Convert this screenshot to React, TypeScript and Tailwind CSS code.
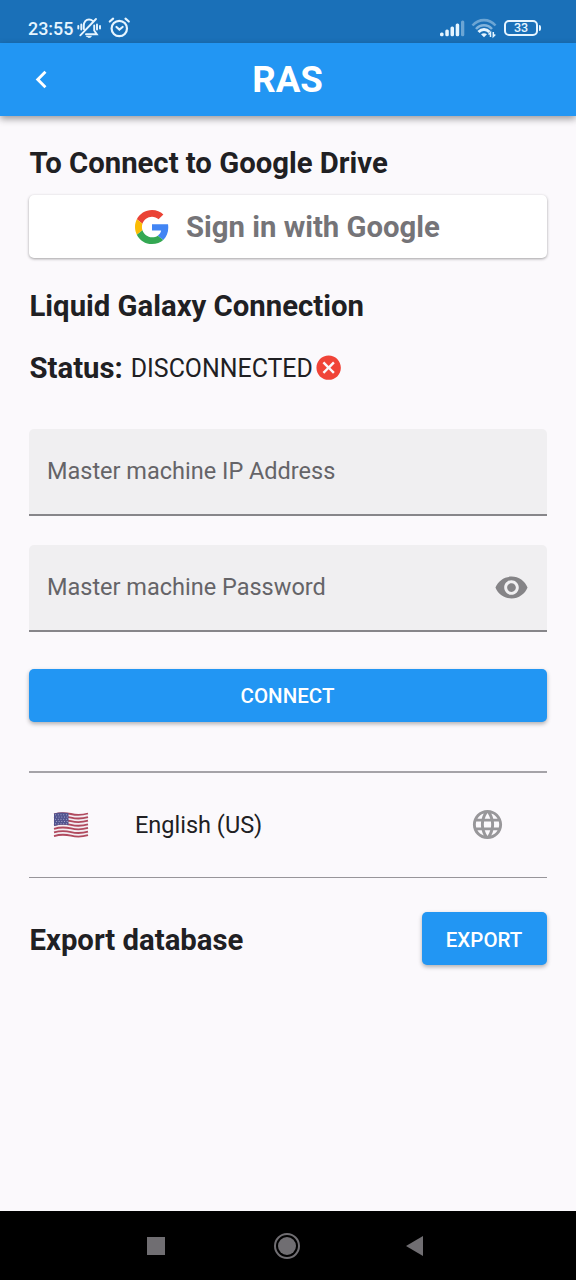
import type { ReactNode } from "react";

function Icon({ d, className }: { d: string; className: string }) {
  return (
    <svg viewBox="0 0 24 24" fill="currentColor" className={className} aria-hidden="true">
      <path d={d} />
    </svg>
  );
}

const CHEVRON = "M15.41 7.41L14 6l-6 6 6 6 1.41-1.41L10.83 12z";
const CANCEL =
  "M12 2C6.47 2 2 6.47 2 12s4.47 10 10 10 10-4.47 10-10S17.53 2 12 2zm5 13.59L15.59 17 12 13.41 8.41 17 7 15.59 10.59 12 7 8.41 8.41 7 12 10.59 15.59 7 17 8.41 13.41 12 17 15.59z";
const EYE =
  "M12 4.5C7 4.5 2.73 7.61 1 12c1.73 4.39 6 7.5 11 7.5s9.27-3.11 11-7.5c-1.73-4.39-6-7.5-11-7.5zM12 17c-2.76 0-5-2.24-5-5s2.24-5 5-5 5 2.24 5 5-2.24 5-5 5zm0-8c-1.66 0-3 1.34-3 3s1.34 3 3 3 3-1.34 3-3-1.34-3-3-3z";
const GLOBE =
  "M11.99 2C6.47 2 2 6.48 2 12s4.47 10 9.99 10C17.52 22 22 17.52 22 12S17.52 2 11.99 2zm6.93 6h-2.95c-.32-1.25-.78-2.45-1.38-3.56 1.84.63 3.37 1.91 4.33 3.56zM12 4.04c.83 1.2 1.48 2.53 1.91 3.96h-3.82c.43-1.43 1.08-2.76 1.91-3.96zM4.26 14C4.1 13.36 4 12.69 4 12s.1-1.36.26-2h3.38c-.08.66-.14 1.32-.14 2s.06 1.34.14 2H4.26zm.82 2h2.95c.32 1.25.78 2.45 1.38 3.56-1.84-.63-3.37-1.9-4.33-3.56zm2.95-8H5.08c.96-1.66 2.49-2.93 4.33-3.56C8.81 5.55 8.35 6.75 8.03 8zM12 19.96c-.83-1.2-1.48-2.53-1.91-3.96h3.82c-.43 1.43-1.08 2.76-1.91 3.96zM14.34 14H9.66c-.09-.66-.16-1.32-.16-2s.07-1.35.16-2h4.68c.09.65.16 1.32.16 2s-.07 1.34-.16 2zm.25 5.56c.6-1.11 1.06-2.31 1.38-3.56h2.95c-.96 1.65-2.49 2.93-4.33 3.56zM16.36 14c.08-.66.14-1.32.14-2s-.06-1.34-.14-2h3.38c.16.64.26 1.31.26 2s-.1 1.36-.26 2h-3.38z";

function StatusBar() {
  return (
    <div className="flex h-[43px] shrink-0 items-start bg-[#1a70b8] pt-[17px] pr-[35px] pl-7 text-[#e6f5ff]">
      <span className="w-[49px] text-[17.9px] leading-[23px] font-medium">23:55</span>
      <svg width="24" height="23" viewBox="0 0 24 23" fill="none" stroke="currentColor" strokeWidth="1.9" strokeLinecap="round" aria-hidden="true">
        <path d="M6.8 12V8.5C6.8 5 9 2.500 12 2.500c1.500 0 2.800.5 3.700 1.400M17.200 8.500v5L19.800 17.300H9M3.300 18.300L19 2M4.300 7.500v5M1.300 9v2.500M20 7.500v5M23 9v2.500" />
        <path d="M9.800 19.300h4.600c-.5 1.500-4.100 1.500-4.600 0z" fill="currentColor" strokeWidth="1" />
      </svg>
      <svg className="ml-[7px]" width="23" height="23" viewBox="0 0 23 23" fill="none" stroke="currentColor" strokeWidth="2.2" strokeLinecap="round" aria-hidden="true">
        <circle cx="11.3" cy="11.5" r="7.7" />
        <path d="M8.500 10l2.900 2.500 3.200-2.500M1.800 4.500L5.100 1.700M20.800 4.500L17.500 1.700" />
      </svg>
      <div className="ml-auto flex">
        <svg width="27" height="23" viewBox="0 0 27 23" fill="currentColor" aria-hidden="true">
          <rect x="1" y="15.5" width="3.6" height="3.8" rx="1.5" />
          <rect x="6.3" y="12.5" width="3.5" height="6.8" rx="1.5" />
          <rect x="11.5" y="9.5" width="3.5" height="9.8" rx="1.5" />
          <rect x="16.7" y="6.5" width="3.5" height="12.8" rx="1.5" />
          <rect x="22" y="3.5" width="3.3" height="15.8" rx="1.5" opacity=".4" />
        </svg>
        <svg className="ml-[5px]" width="26" height="23" viewBox="0 0 26 23" fill="none" stroke="currentColor" aria-hidden="true">
          <path d="M1.500 8.500C8 1.300 18 1.300 24.500 8.500" strokeWidth="2.6" opacity=".4" />
          <path d="M5 12C9.500 7 16.500 7 21 12" strokeWidth="2.5" opacity=".5" />
          <path d="M7.500 15c3.300-3.500 7.700-3.500 11 0" strokeWidth="3" />
          <path d="M10 17.300c2-1.500 4-1.500 6 0L13 20.300z" fill="currentColor" stroke="none" />
          <path d="M19.500 20v-4.500l-2 2M22.300 15v4.500l2-2" strokeWidth="1.5" />
        </svg>
        <div className="mt-[3px] ml-[7px] flex">
          <div className="flex h-[16px] w-[34px] items-center justify-center rounded-[5px] border-2 border-[#e6f5ff] text-[12.5px] leading-[12px] font-medium">
            33
          </div>
          <div className="mt-[5px] ml-px h-[6px] w-[2px] rounded-r-sm bg-[#e6f5ff]" />
        </div>
      </div>
    </div>
  );
}

function GoogleLogo() {
  return (
    <svg width="34" height="34" viewBox="0 0 48 48" aria-hidden="true">
      <path fill="#EA4335" d="M24 9.500c3.540 0 6.710 1.220 9.210 3.600l6.850-6.850C35.900 2.380 30.470 0 24 0 14.620 0 6.510 5.380 2.560 13.220l7.980 6.190C12.430 13.720 17.740 9.500 24 9.500z" />
      <path fill="#4285F4" d="M46.980 24.550c0-1.570-.15-3.090-.38-4.550H24v9.020h12.940c-.58 2.960-2.260 5.480-4.780 7.180l7.730 6c4.510-4.180 7.090-10.360 7.090-17.650z" />
      <path fill="#FBBC05" d="M10.530 28.590c-.48-1.450-.76-2.990-.76-4.590s.27-3.140.76-4.590l-7.980-6.190C.92 16.460 0 20.120 0 24c0 3.880.92 7.540 2.560 10.780l7.970-6.190z" />
      <path fill="#34A853" d="M24 48c6.480 0 11.930-2.130 15.890-5.810l-7.730-6c-2.150 1.450-4.920 2.300-8.160 2.300-6.260 0-11.570-4.220-13.470-9.910l-7.980 6.190C6.510 42.620 14.620 48 24 48z" />
    </svg>
  );
}

function Flag() {
  return (
    <svg width="36" height="26" viewBox="0 0 36 26" aria-hidden="true">
      <path d="M1 1.500C8-.5 13 .5 18 1.700S29 2.700 35 1v22.500c-6 2-11 1.500-17 .3S7 23 1 25z" fill="#f3edf2" />
      <g fill="none" stroke="#b04a5e" strokeWidth="1.8">
        {[0, 1, 2, 3, 4, 5, 6].map((i) => (
          <path key={i} transform={`translate(0 ${i * 3.62})`} d="M1 2.300C8 .3 13 .8 18 2s11 1.200 17-.5" />
        ))}
      </g>
      <path d="M1 1.500C6 .1 11 .2 15.500 1.100V13.200C11 12.500 6 12.500 1 14z" fill="#52548f" />
      <g fill="#b5b6d5">
        {[0, 1, 2, 3, 4].map((row) =>
          [0, 1, 2, 3, 4].map((col) => (
            <circle key={`${row}-${col}`} cx={2.6 + col * 2.7 + (row % 2) * 0.8} cy={2.7 + row * 2.25} r=".55" />
          )),
        )}
      </g>
    </svg>
  );
}

function Heading({ children }: { children: ReactNode }) {
  return <h2 className="pl-[0.5px] text-[29.3px] leading-[34px] font-bold whitespace-nowrap">{children}</h2>;
}

function Field({ label, children }: { label: string; children?: ReactNode }) {
  return (
    <div className="flex h-[87px] items-center justify-between rounded-t-[5px] border-b-2 border-[#87868a] bg-[#f0eff1] px-[18px] text-[#656468]">
      <span className="pb-px text-[23.5px] leading-7 whitespace-nowrap">{label}</span>
      {children}
    </div>
  );
}

export default function App() {
  return (
    <div className="flex h-[1280px] w-[576px] flex-col overflow-hidden bg-[#fbf9fc] font-[Roboto,sans-serif] text-[#202023]">
      <StatusBar />
      <header className="grid h-[73px] shrink-0 grid-cols-[82px_1fr_82px] items-center bg-[#2296f3] text-white shadow-[0_3px_7px_rgba(0,0,0,0.38)]">
        <Icon d={CHEVRON} className="ml-[23.5px] size-[35px]" />
        <h1 className="pr-px text-center text-[36.7px] leading-[43px] font-bold">RAS</h1>
      </header>
      <main className="flex flex-1 flex-col px-[29px] pt-[30px]">
        <Heading>To Connect to Google Drive</Heading>
        <button className="mt-[15px] flex h-[63px] items-center rounded-[5px] bg-white pl-[106px] shadow-[0_1px_3px_rgba(0,0,0,0.36)]">
          <GoogleLogo />
          <span className="ml-[17px] text-[29.3px] leading-[34px] font-bold whitespace-nowrap text-[#757478]">Sign in with Google</span>
        </button>
        <div className="mt-[31px]">
          <Heading>Liquid Galaxy Connection</Heading>
        </div>
        <div className="mt-[28px] flex h-[34px] items-center">
          <Heading>Status:</Heading>
          <span className="ml-2 text-[24.9px] leading-[31px]">DISCONNECTED</span>
          <Icon d={CANCEL} className="ml-px size-[29.3px] text-[#f04438]" />
        </div>
        <div className="mt-[44px]">
          <Field label="Master machine IP Address" />
        </div>
        <div className="mt-[29px]">
          <Field label="Master machine Password">
            <Icon d={EYE} className="size-[35px] text-[#858487]" />
          </Field>
        </div>
        <button className="mt-[37px] h-[53px] rounded-[5px] bg-[#2296f3] pt-[2px] pr-px text-[20.5px] font-medium text-white shadow-[0_2px_4px_rgba(0,0,0,0.3)]">
          CONNECT
        </button>
        <div className="mt-[49px] flex h-[107px] items-center border-t-2 border-b border-t-[#a5a3a8] border-b-[#97959a] pl-6">
          <Flag />
          <span className="ml-[46px] pb-px text-[23.5px] leading-7">English (US)</span>
          <Icon d={GLOBE} className="mr-[42px] mb-[2px] ml-auto size-[35px] text-[#98979a]" />
        </div>
        <div className="mt-[34px] flex h-[53px] items-center justify-between">
          <div className="pt-[2px]">
            <Heading>Export database</Heading>
          </div>
          <button className="h-[53px] w-[125px] rounded-[5px] bg-[#2296f3] pt-[3px] pr-px text-[20.5px] font-medium text-white shadow-[0_2px_4px_rgba(0,0,0,0.3)]">
            EXPORT
          </button>
        </div>
      </main>
      <nav className="flex h-[69px] shrink-0 items-center bg-black pl-[147px] text-[#706e72]">
        <div className="size-[18px] bg-[#706e72]" />
        <div className="ml-[109px] flex size-[26px] items-center justify-center rounded-full border-2 border-[#706e72]">
          <div className="size-[18px] rounded-full bg-[#706e72]" />
        </div>
        <svg className="ml-[105px]" width="19" height="20" viewBox="0 0 19 20" fill="currentColor" aria-hidden="true">
          <path d="M1 10L18 0v20z" />
        </svg>
      </nav>
    </div>
  );
}
